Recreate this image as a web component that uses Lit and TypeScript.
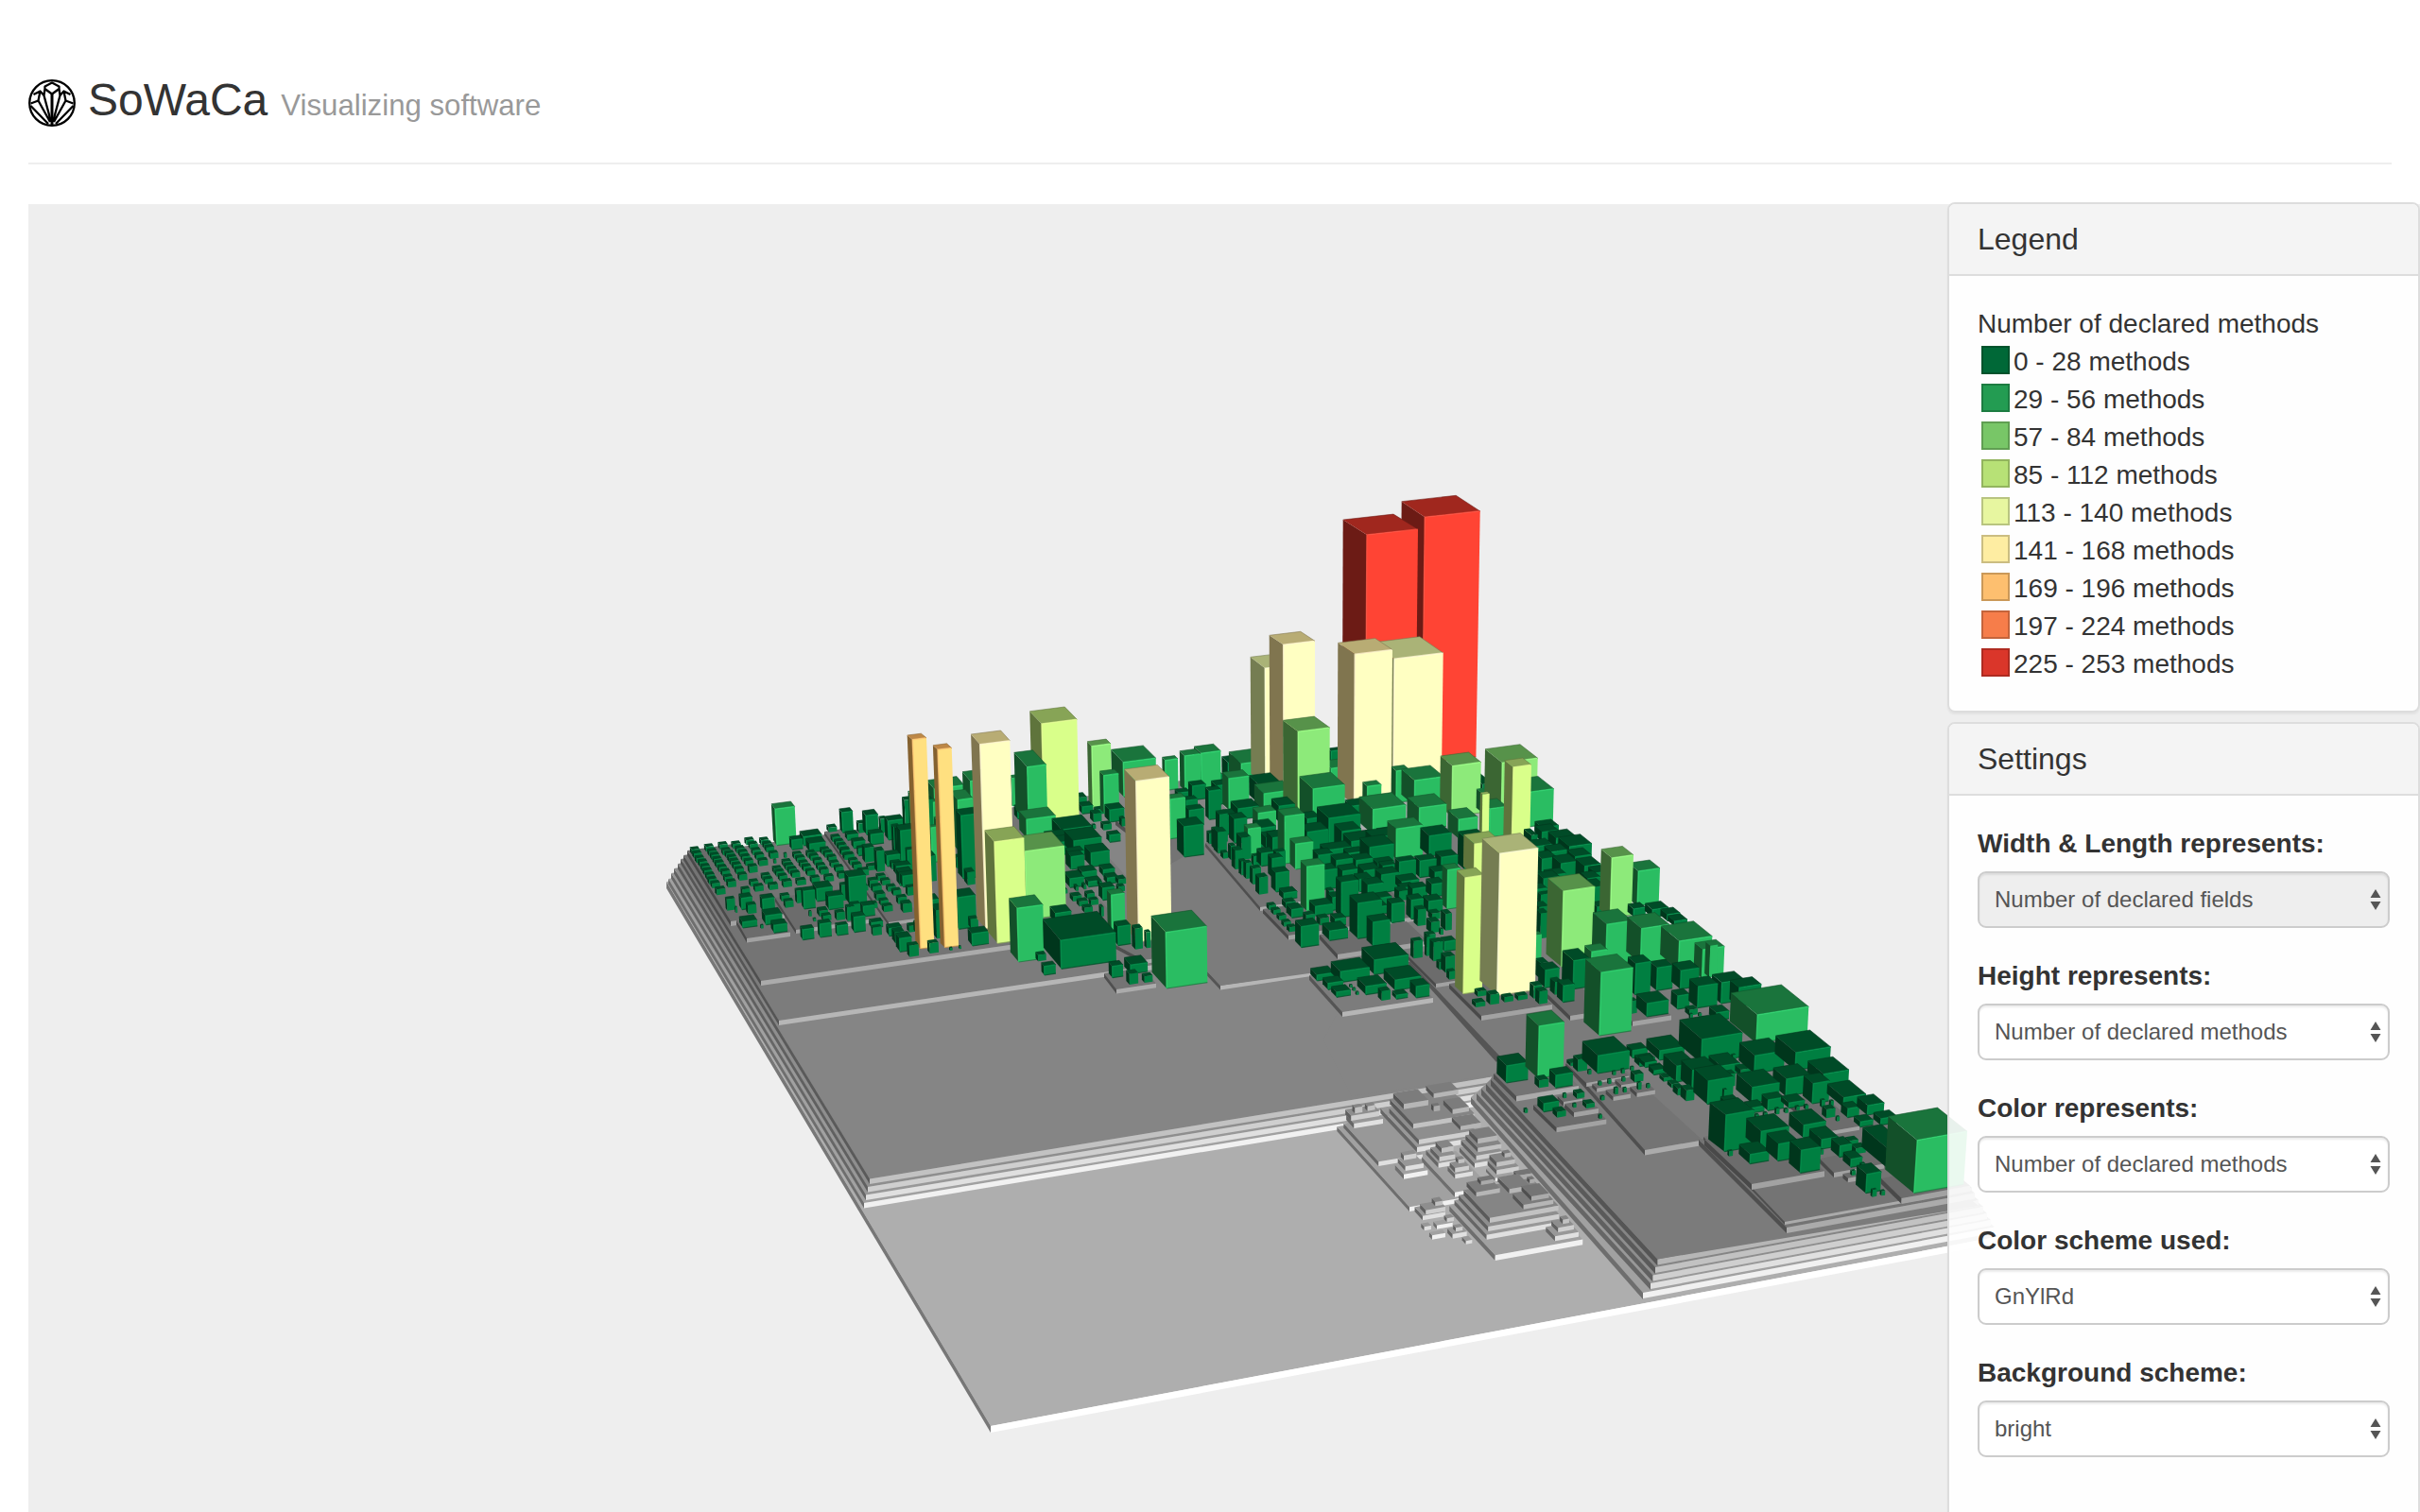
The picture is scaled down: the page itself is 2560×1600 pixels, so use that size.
import { LitElement, html, svg, css } from "lit";
import { customElement, property } from "lit/decorators.js";

type Pt = [number, number];
interface Tone { front: string; top: string; side: string; edge: string; }

/* Vanishing points of the two ground axes and of the vertical axis. */
const VD: Pt = [-300, -708];
const VW: Pt = [12800, -700];
const VV: Pt = [1385, 11500];

const TONES: Record<string, Tone> = {
  a: { front: "#007f41", top: "#004b27", side: "#00361c", edge: "#008f4b" },
  b: { front: "#2abd62", top: "#1a743c", side: "#135029", edge: "#2fd670" },
  c: { front: "#8dea7a", top: "#57924a", side: "#3b6633", edge: "#9bff85" },
  d: { front: "#d9ff8a", top: "#87a456", side: "#5f743c", edge: "#e6ff93" },
  e: { front: "#ffffc2", top: "#aab377", side: "#757d52", edge: "#ffffda" },
  f: { front: "#ffffc2", top: "#b8ac74", side: "#80754f", edge: "#fff5d0" },
  g: { front: "#ffe080", top: "#bd8746", side: "#84612f", edge: "#ffc672" },
  h: { front: "#ff4434", top: "#a0271e", side: "#6c1b15", edge: "#ff5140" },
  "0": { front: "#ffffff", top: "#aeaeae", side: "#777777", edge: "" },
  "1": { front: "#f1f1f1", top: "#a1a1a1", side: "#6e6e6e", edge: "" },
  "2": { front: "#e0e0e0", top: "#989898", side: "#666666", edge: "" },
  "3": { front: "#cfcfcf", top: "#8e8e8e", side: "#606060", edge: "" },
  "4": { front: "#c2c2c2", top: "#858585", side: "#5a5a5a", edge: "" },
  "5": { front: "#b6b6b6", top: "#7c7c7c", side: "#555555", edge: "" },
  "6": { front: "#ababab", top: "#747474", side: "#4f4f4f", edge: "" },
  "7": { front: "#a2a2a2", top: "#6c6c6c", side: "#494949", edge: "" },
};

const toward = (p: Pt, v: Pt, t: number): Pt => [p[0] + (v[0] - p[0]) * t, p[1] + (v[1] - p[1]) * t];
const pts = (...p: Pt[]) => p.map((q) => q[0].toFixed(1) + "," + q[1].toFixed(1)).join(" ");

interface Box { k: string; x: number; y: number; w: number; h: number; d: number; r: number; }

/* A block is "tone x y w h d r": upper left corner of the front face, its size,
   how far the roof recedes, and optionally the run of the receding edge per
   unit of rise. Lengths are in thirds of a pixel from the tile's origin. */
function tile(ox: number, oy: number, text: string): Box[] {
  return text.trim().split(/[;\n]+/).map((s) => s.trim()).filter(Boolean).map((s) => {
    const [k, ...n] = s.split(/\s+/);
    const [x, y, w = 25, h = 15, d = 9, r = 0] = n.map(Number);
    return { k, x: ox + x / 3, y: oy + y / 3, w: w / 3, h: h / 3, d: d / 3, r };
  });
}

function drawBox(b: Box) {
  const t = TONES[b.k];
  const A: Pt = [b.x, b.y];
  const back: Pt = b.r ? [b.x - b.r * (b.y - VD[1]), VD[1]] : VD;
  const B = toward(A, VW, b.w / (VW[0] - b.x));
  const td = b.d / (b.y - VD[1]);
  const D = toward(A, back, td);
  const C = toward(B, back, td);
  const tv = b.h / (VV[1] - b.y);
  const A2 = toward(A, VV, tv), B2 = toward(B, VV, tv), D2 = toward(D, VV, tv);
  const big = t.edge && b.w > 11;
  return svg`<polygon points=${pts(A, D, D2, A2)} fill=${t.side}/>
    <polygon points=${pts(A, B, C, D)} fill=${t.top}/>
    <polygon points=${pts(A, B, B2, A2)} fill=${t.front}/>
    ${big ? svg`<polyline points=${pts(A2, A, B)} fill="none" stroke=${t.edge} stroke-width="1.6" stroke-linejoin="round" opacity=".75"/>
      <polyline points=${pts(A2, B2)} fill="none" stroke=${t.top} stroke-width="1.2" opacity=".7"/>
      <polyline points=${pts(D, C, B)} fill="none" stroke=${t.side} stroke-width=".8" opacity=".7"/>` : ""}`;
}

/* A terrace: front left corner, x of the front right corner, back left corner. */
type Terrace = [string, number, number, number, number, number, number?];
function drawTerrace([k, fx, fy, rx, bx, by, th = 5.5]: Terrace) {
  const t = TONES[k];
  const F: Pt = [fx, fy], R = toward(F, VW, (rx - fx) / (VW[0] - fx));
  const B: Pt = [bx, by], BR = toward(R, VD, (fy - by) / (fy - VD[1]));
  const dn = (p: Pt): Pt => [p[0], p[1] + th];
  return svg`<polygon points=${pts(F, R, BR, B)} fill=${t.top}/>
    <polygon points=${pts(F, B, dn(B), dn(F))} fill=${t.side}/>
    <polygon points=${pts(F, R, dn(R), dn(F))} fill=${t.front}/>`;
}

const WEST: Terrace[] = [
  ["1", 914, 1273, 1570, 707, 930], ["2", 916, 1264.5, 1574, 710, 924], ["3", 918, 1256, 1579, 713, 919],
  ["4", 920, 1247.5, 1586, 717, 914], ["5", 824, 1080, 1270, 720, 909, 5], ["6", 805, 1038, 1190, 723, 905, 5],
  ["7", 773, 975, 830, 727, 900, 5], ["5", 1291, 1043, 1440, 1200, 945, 4.5],
  ["7", 790, 993, 836, 779, 974, 4.5], ["7", 842, 984, 930, 820, 950, 4], ["7", 940, 976, 974, 872, 880, 3.5],
  ["6", 1181, 1047, 1223, 1168, 1030, 4.5], ["6", 1239, 914, 1277, 1180, 868, 5], ["6", 1210, 1016, 1240, 1180, 1000, 4],
];
const EAST: Terrace[] = [
  ["6", 1333, 960, 1480, 1275, 892, 4], ["7", 1363, 990, 1500, 1336, 962, 4.5], ["7", 1415, 1010, 1510, 1396, 989, 5],
  ["7", 1519, 1041, 1570, 1488, 1010, 4], ["7", 1567, 1075, 1642, 1533, 1041, 5], ["7", 1661, 1075, 1700, 1633, 1048, 5],
  ["7", 1727, 1081, 1768, 1700, 1055, 5], ["6", 1604, 1160, 1670, 1580, 1136, 5.5],
  ["6", 1740, 1217, 1801, 1657, 1124, 5.5], ["6", 1890, 1299, 2089, 1797, 1206, 6], ["6", 1888, 1293, 2086, 1802, 1203, 3],
  ["7", 1853, 1253, 1930, 1803, 1206, 6], ["7", 1940, 1241, 1993, 1925, 1226, 5], ["7", 2011.5, 1268, 2084, 1990, 1247, 6],
  ["7", 1925, 1199, 1967, 1890, 1165, 4],
];

/* Side walls of the eastern plateau, lowest first: back corner, front corner, right end. */
const STAIRS: [string, Pt, Pt, number][] = [
  ["1", [1556, 1161], [1738, 1368], 2110], ["2", [1562, 1157], [1746, 1358], 2106], ["3", [1567, 1152], [1748.5, 1349.5], 2102],
  ["4", [1572, 1147], [1751, 1341], 2098], ["5", [1577, 1142], [1753.5, 1332.5], 2093],
];

const HILL = tile(1300, 1020, `
1 573 772 240 14 255;1 845 925 278 17 157;2 475 628 140 14 122;1 717 725 110 15 112
2 397 507 92 15 27;3 388 482 90 16 20;4 400 457 24 18 9;4 440 452 24 15 9
2 597 582 190 16 124;3 603 558 180 15 100;4 585 508 195 15 78;5 650 412 78 14 25;5 555 445 78 16 35;6 650 452 20 17 8;5 710 462 52 15 30;5 735 515 65 13 28
1 555 668 76 15 30;2 560 643 58 14 26;3 555 608 40 15 10
2 665 633 58 14 42;3 668 613 50 14 30;4 675 585 38 15 20
2 780 633 90 14 50;3 785 609 82 14 50;4 790 584 75 14 40;5 790 555 62 16 28
1 845 680 60 10 30;3 850 655 70 14 30;4 850 630 58 14 24;5 875 602 20 13 9
2 718 668 56 14 25;3 718 648 44 14 18;4 728 622 20 12 9
2 818 860 232 15 110;3 823 834 225 15 100;4 828 806 218 16 88;5 785 725 75 14 32;6 800 690 40 12 12;6 918 672 45 12 14;6 955 685 16 12 9;5 890 715 65 14 38;5 935 765 95 14 35;6 960 738 56 14 32
2 1035 865 75 15 30;3 1045 838 50 14 22;4 1060 812 20 14 10
2 615 800 72 14 28;3 625 782 62 14 20;4 655 756 24 13 12;1 660 830 50 12 12;3 692 808 22 12 10;2 710 858 45 14 18;3 720 838 22 12 9;2 620 835 22 12 11;1 645 862 42 13 10;2 752 880 20 10 13`);

const BLOCKS = [
  ...tile(690, 720, `
a 125 538;a 132 550;a 140 565;a 150 577;a 158 591;a 165 604;a 173 618;a 180 632;a 190 645;a 204 664 28 18
a 170 529;a 180 543;a 188 555;a 196 568;a 203 580;a 212 594;a 222 607;a 230 625;a 240 640 26 18
a 214 522;a 224 540;a 235 550;a 243 562;a 250 574;a 258 586;a 266 600;a 276 618 25 18
a 256 520;a 268 534;a 278 546;a 286 560;a 296 574;a 308 592 26 20
a 298 508;a 310 521;a 319 540;a 330 555;a 340 573 27 17
a 345 508;a 355 520;a 362 531;a 374 550 26 17;a 419 550 8 14 4;a 386 570 8 12 4
a 386 598;a 394 608;a 404 622;a 416 640 27 18;a 312 640;a 326 655 27 16;a 350 620;a 358 632;a 372 650 27 16;a 286 664 24 20
a 416 576;a 424 588;a 434 600;a 444 612;a 460 636 28 16
a 450 552;a 460 564;a 470 580;a 480 592;a 492 606;a 506 628 26 16
a 493 548;a 503 558;a 515 572;a 525 588;a 535 602;a 550 624 26 16
a 538 538;a 548 548;a 560 562;a 568 580;a 582 594;a 592 614 22 16
a 572 498;a 583 512;a 592 524;a 603 538;a 616 554;a 628 572;a 640 586;a 657 604 30 18;a 560 468 26 14 10
a 620 492 34 16 12;a 640 514 36 20 12;a 655 535 34 22;a 600 540;a 610 555
b 390 409 62 115 17;a 480 497 58 28 18;a 500 520 50 26 18;a 443 508 34 30 12;a 602 420 34 64 12;a 678 430 38 60 16;a 694 490 40 32 14;a 655 455 20 30 10
a 748 447 50 60 15;a 725 440 18 44;a 765 465 20 80;a 788 478 60 100 18;a 775 470 24 90;a 800 380 30 160 10;b 818 360 40 190 8;a 810 540 40 70
a 674 532 30 46 12;a 712 542 24 66 12;a 745 557 42 34 14;a 685 590 26 14;a 775 592 46 26 14;a 786 612 40 40 16;a 795 622 45 34 14;a 810 658 30 26;a 760 580 30 20
b 895 345 95 60 28;b 890 388 45 110 10;b 885 468 40 110 8;b 970 380 47 165 28;b 1010 320 60 170 30;b 900 440 20 130 8
b 1140 310 22 90;b 1190 275 60 180 46;a 1160 410 40 30 14;a 980 430 60 200 20
g 826 188 44 664 14 1.2;g 906 220 44 628 14 1.1;f 1040 203 95 585 32;d 1236 138 112 310 40;d 1086 513 94 322 37;c 1183 543 125 217 46;b 1158 724 82 170 32
b 1188 442 92 60 28;a 970 690 56 100 24;a 1010 758 24 28 10;a 1015 805 52 38 18;a 965 562 22 34 10;a 1000 610 24 40 14;a 1008 560 8 30;a 945 850 8 8 4;a 975 845 6 8 4;a 900 730 30 90 20;a 975 775 8 12
a 880 835 28 32 10;a 815 842 30 36 10;a 785 820 38 42 18;a 770 800 30 34 14;a 752 788 40 24 14;a 815 780 24 20 10;a 835 770 24 30;a 700 785 28 26 8;a 696 770 36 16 12
a 477 792 36 32 12;a 532 774 36 42 12;a 587 780 34 30 10;a 640 752 36 48 14;a 618 720 24 44;a 585 738 26 24 10;a 670 718 36 32 14;a 630 712 30 30
a 624 626 54 86 20;a 600 650 20 50;a 522 662 50 40 20;a 560 688 46 40 16;a 480 670 36 56 12;a 458 668 20 40;a 530 732 28 18 12;a 542 748 26 16;a 498 734 8 16 4;a 512 757 8 9 4
a 350 695 38 38 14;a 283 692 34 36 14;a 236 695 26 36 8;a 303 714 27 28 10;a 410 685 26 16;a 422 702 26 20;a 264 720 6 18 4;a 287 768 46 18 18;a 360 748 52 28 20;a 386 778 42 24 16;a 345 778 8 10 4
a 690 636 26 24 10;a 700 655 28 18;a 712 680 28 20 12;a 735 718 28 18 10;a 716 622;a 730 636;a 748 656;a 765 668;a 780 690 28 20;a 796 710 28 28 12;a 660 655;a 690 710;a 725 700;a 870 700 40 60 18;a 880 760 40 40
a 860 380 30 150 10;a 870 560 30 80 16;a 1290 515 60 40 20;a 1330 560 40 40 16`),
  ...tile(1100, 720, `
c 165 209 60 195 15;b 203 302 47 122 14;b 265 260 103 110 40;f 305 320 106 510 38;b 398 254 40 95 10;b 460 240 50 110 16;b 512 232 62 110 22;a 598 262 40 60 20;b 640 265 88 60 38
b 600 312 64 100 20;a 530 305 50 34 12;a 560 335 40 60 16;a 485 336 42 44 14;a 537 352 38 90 12;a 475 413 46 50 14;a 440 358 36 28 12;a 465 382 36 28 12;b 414 378 48 125 14;a 458 465 62 96 24
a 695 332 68 60 30;b 712 360 90 60 30;a 630 408 66 34 24;b 694 422 56 72 18;b 778 432 62 150 22;c 820 163 100 257 36 1.35;b 868 345 100 110 40;b 925 280 50 60 24;a 925 225 40 50
a 918 438 100 90 36;a 850 482 66 70 24;a 850 440 40 60 20;b 1058 410 104 80 40;b 1040 337 44 60 14;b 1132 288 40 100 14;b 1190 318 92 80 36;b 1205 405 86 70 34;b 1132 472 84 95 26
a 990 512 80 30 26;a 1048 530 76 60 30;a 1090 490 60 26 20;a 1237 494 70 64 26;c 1310 272 90 160 32;a 990 400 60 30 20;a 750 545 30 60
a 885 556 46 60 18;a 942 572 52 70 18;a 1005 572 52 60 18;a 1075 582 50 44 16;a 1142 577 52 60 14;a 1207 574 52 52 16;a 1275 562 52 50 18;b 812 520 56 80 18;b 848 592 56 140 20;b 662 472 40 90 14;a 910 540 80 40 20;a 980 550 50 30 16
a 900 604 44 60 18;a 962 606 50 40 18;a 930 690 36 40 16;a 1150 640 54 26 20;a 1030 605 50 34 20;a 870 650 30 60 14;a 1090 590 40 40 14;a 1255 610 40 30 18;a 700 470 50 60 24;a 740 500 50 50 20;a 640 500 30 70 16;a 1060 500 70 40 24;a 960 480 60 60 24;a 760 400 50 50 24;a 1150 660 40 30 14;a 1070 720 34 24 16
a 565 482 28 68 14;a 590 430 36 60 18;a 618 442 40 75 18;a 570 425 26 90 12;a 538 486 18 34;a 553 474 18 60;a 606 526 16 44;a 620 540 24 60 12;a 640 575 16 44;a 655 580 18 50;a 676 598 26 50 10;a 696 626 28 54 12;a 582 548 16 18
a 720 500 44 36 18;a 704 550 40 40 16;a 738 566 34 60 14;a 750 612 42 60 16;a 775 676 42 20 16;a 680 560 40 30
a 728 715 22 14;a 742 730 22 14;a 760 748 22 14;a 775 768 22 14;a 792 784 22 15;a 780 705 32 18 12;a 800 728 36 26 18;a 845 745 28 26 10;a 875 718 56 30 20;a 890 756 28 22 12;a 938 758 34 22 16
a 830 782 56 66 20;a 920 796 58 30 24;a 1010 708 76 112 26;a 1058 768 54 76 20;a 958 642 54 110 18;a 1042 650 50 50 20;a 1085 618 56 56 20;a 1015 632 40 40 18;a 1075 692 42 30 16;a 1118 710 40 60 16;a 1180 698 38 60 16;a 1185 662 46 34 16;a 1245 648 40 40 18;a 1235 702 44 36 18;a 1200 728 26 52 12;a 1245 740 26 20 12;a 1242 768 28 34 14;a 1288 742 20 52 14;a 1272 790 9 18 5;a 918 668 16 60 10;a 1140 670 30 30 14
b 1295 602 40 124 16;a 1187 828 28 55 10;a 1230 808 26 40 10;a 1228 815 12 60 6;a 1250 832 30 60 12;a 1285 830 36 30 14;a 1288 878 30 50 14;a 1268 895 16 24;a 1300 925 20 25
a 880 936 55 18 22;a 955 925 92 34 32;a 1062 888 108 46 40;a 915 962 48 20 18;a 942 990 45 16 18;a 1035 972 65 26 28;a 1128 952 82 32 36;a 1195 972 42 36 20;a 1085 987 28 30 12;a 1132 1000 36 12 14;a 985 968 8 8 4;a 995 978 8 8 4;a 1005 990 8 9 4
a 66 826 175 90 68;b 400 800 130 178 52;a 248 782 40 60 16;a 302 788 24 66 12;a 230 908 34 36 14;a 288 904 54 28 24;a 284 932 28 34 12;a 332 940 26 20 10;a 338 800 14 50 8;b 227 682 42 112 16;a 14 908 36 28 12;a -6 872 26 20 10
a 70 475 95 34 36;a 108 510 88 46 34;a 95 548 46 50 16;a 163 548 58 44 24;a 30 500 60 40 20;a 96 630 44 28 22;a 135 610 46 20 18;a 202 602 36 20 16;a 215 628 34 18 14;a 155 640 40 16 14;a 105 686 28 16 12;a 125 702 28 16 10;a 142 722 26 16 10;a 150 678 24 16 10;a 162 698 24 16;a 200 660 38 38 16;a 250 632 24 16 12;a 250 655 20 16;a 50 740 50 30 22;a 115 655 8 14;a 140 650 8 14;a 195 720 8 30
a 222 412 46 38 18;a 125 372 24 20 14;a 135 402 34 22 14;a 170 424 26 26 12;a 202 458 26 18 10;a 222 492 34 22 12;a 168 460 10 12 5;a 260 440 12 24;a 180 410 24 16;a 190 640 8 14;a 80 665 8 12`),
  ...tile(1300, 500, `
h 438 198 162 800 48 1.58;h 622 142 175 780 50 1.48;f 173 547 100 450 30 1.5;e 115 622 60 370 36 1.3;e 525 592 155 400 52 1.4;f 400 577 119 475 36 1.5`),
  ...tile(1500, 760, `
c 268 142 112 150 44;d 303 156 57 236 22;d 205 242 22 140 6;b 345 236 86 110 40;b 228 288 54 90 26;b 130 322 60 60 30;b 205 240 20 60 16;a 205 210 30 50 30;d 180 400 80 100 30;e 260 430 122 450 48;d 150 507 60 368 24;a 150 380 60 100 20
a 395 362 50 30 20;a 440 382 60 30 22;a 482 408 70 46 30;a 375 408 52 30 20;a 395 448 46 50 22;a 455 462 52 46 24;a 530 470 50 50 24;a 565 492 40 60 20;a 360 372 20 30 20;a 420 500 50 30 18;a 370 545 40 30 16;a 545 540 50 50 24;a 365 495 30 40;a 570 600 36 30 16;a 400 560 60 40
a 395 348 52 30 20;a 425 425 50 40 20;a 500 440 50 50 22;a 400 510 50 60 20;a 390 620 24 80 14;a 540 510 40 60 20
c 616 444 68 190 28;b 700 486 68 110 26;c 462 550 100 240 42;b 600 655 80 130 38;b 710 668 88 110 38;b 830 708 104 90 48;b 905 735 68 90 22;b 928 722 24 100 12
a 685 606 38 24 16;a 745 608 50 24 20;a 792 624 40 20 18;a 815 645 40 16 18;a 692 780 48 98 22;a 760 793 50 72 20;a 835 802 58 58 24;a 890 852 62 68 24;a 965 840 70 66 26;a 1020 856 70 60 24
b 1078 942 162 90 70;a 728 906 68 42 30;a 825 882 38 42 18;a 680 898 16 40 10;a 862 926 26 18 12;a 948 936 40 24 20;a 865 940 8 14 4;a 893 938 8 10 4;a 905 950 8 8 4
a 495 770 50 90 32;b 552 742 50 60 20;a 405 800 44 56 20;a 390 778 24 50 16;a 435 838 22 40 14;a 462 850 36 52 18;a 386 868 26 40 12;a 368 850 26 40 12
a 190 868 28 16 10;a 230 878 28 32 12;a 275 886 28 16 10;a 318 882 30 14 10;a 184 904 30 14 12;a 385 600 30 60 16;b 375 688 18 90;a 390 560 20 60;b 582 808 101 200 44`),
  ...tile(1300, 1020, `
a 882 324 68 54 30;b 985 198 80 165 38;a 985 370 30 24 14;a 1038 354 54 40 20;a 1172 292 100 56 46;a 1108 304 30 38 14;a 1085 315 20 10 12;a 1000 444 48 26 20;a 1042 470 28 18 14;a 1105 412 24 16 12;a 1135 445 26 14 12;a 1288 352 28 24 12;a 1282 275 46 24 18;a 1305 306 48 20 16;a 1348 334 34 18 14
a 1142 338 9 14 4;a 1220 342 9 12 4;a 1248 335 9 14 4;a 1277 328 9 12 4;a 1175 375 9 12 4;a 1205 368 9 14 4;a 1250 362 9 12 4;a 1300 378 10 22 5;a 1226 395 10 20 5;a 1254 395 9 14 4;a 1328 383 9 12 4;a 1183 422 10 12 5;a 940 462 9 12 5;a 1063 413 9 14 4;a 1094 445 9 12 4;a 1176 480 9 12 4`),
  ...tile(1700, 980, `
a 302 360 128 76 62;a 470 412 94 56 42;a 600 402 110 56 54;a 688 470 80 40 42;a 462 512 86 50 44;a 570 486 78 54 36;a 655 500 52 64 26;a 752 545 70 30 44;a 828 570 52 30 28;a 765 580 36 28 18;a 697 582 28 28 12;a 805 622 40 16 18;a 870 612 50 20 20;a 730 606 9 14 4
a 168 396 78 30 38;a 222 445 60 50 38;a 272 458 75 60 32;a 322 492 80 74 40;a 362 445 60 30 34;a 425 456 32 18 16;a 378 600 90 116 40 1.3;a 388 470 20 40 12;a 372 520 10 40 5;a 400 410 10 20 5
a 490 652 88 60 42;a 545 692 62 54 34;a 617 712 62 72 32;a 455 725 60 30 32;a 625 632 70 40 40;a 682 678 52 30 34;a 740 698 38 36 24;a 775 740 36 26 22;a 790 706 32 18 14;a 770 682 28 20 12;a 825 788 46 60 28;a 843 838 14 22 5;a 872 842 11 14 5;a 778 778 12 14 5;a 808 755 12 16 5;a 680 710 8 16 4
a 890 706 60 60 66;b 985 680 158 168 76;a 90 398 38 18 20;a 122 435 36 14 22;a 150 460 36 12 16;a 180 482 28 12 12;a 205 502 24 12 12;a 225 516 20 22 14;a 252 522 26 34 16
a 512 552 50 34 18;a 578 562 50 16 22;a 458 578 42 16 20;a 378 558 40 14 16;a 538 580 10 18 5;a 566 582 10 12 5;a 602 574 10 12 5;a 630 570 10 12 5;a 682 553 11 22 5;a 711 556 9 16 5;a 473 600 10 12 5;a 500 594 10 14 5;a 388 715 12 16 5;a 440 520 20 20`),
].sort((p, q) => p.y + p.h + 0.15 * p.x - (q.y + q.h + 0.15 * q.x));

const LOTS = tile(1300, 1020, `
7 1135 378 135 12 62;7 1040 520 158 15 72;7 1062 438 60 14 18;7 1095 472 78 15 28;7 1168 395 60 12 14;7 1245 385 62 12 18;7 1220 422 55 13 22;7 1295 410 58 13 20`)
  .concat(tile(1700, 980, `7 765 800 28 14 14`));

const CLASSES: [string, string][] = [
  ["#006837", "0 - 28 methods"], ["#239c52", "29 - 56 methods"], ["#78c667", "57 - 84 methods"],
  ["#b7e176", "85 - 112 methods"], ["#e7f6a0", "113 - 140 methods"], ["#feeda2", "141 - 168 methods"],
  ["#fdbf6f", "169 - 196 methods"], ["#f67d4a", "197 - 224 methods"], ["#da362a", "225 - 253 methods"],
];

@customElement("city-view")
class CityView extends LitElement {
  static styles = css`:host { display: block; } .scene { display: block; width: 2530px; height: 1384px; }`;
  render() {
    return html`<svg class="scene" viewBox="30 216 2530 1384">
      ${drawTerrace(["0", 1048, 1509, 2114, 705, 933, 7])}
      ${WEST.map(drawTerrace)}
      ${HILL.map(drawBox)}
      ${STAIRS.map(([k, b, f, rx]) => {
        const t = TONES[k];
        const r = toward(f, VW, (rx - f[0]) / (VW[0] - f[0]));
        const dn = (p: Pt, n = 7): Pt => [p[0], p[1] + n];
        return svg`<polygon points=${pts(f, r, toward(r, VD, 0.15), b)} fill=${t.top}/>
          <polygon points=${pts(f, b, dn(b), dn(f))} fill=${t.side}/>
          <polygon points=${pts(f, r, dn(r, 6), dn(f, 6))} fill=${t.front}/>`;
      })}
      <polygon fill="#7b7b7b" points="1753.5,1332.5 2093,1276 1610,878 1276,878 1276,893 1492,1020 1587,1120 1577,1142"/>
      <polygon fill="#858585" points="1440,1024 1492,1020 1587,1120 1582,1137 1430,1160 1400,1100"/>
      <polygon fill="#7c7c7c" points="1276,893 1333,960 1400,940 1488,1010 1492,1018 1440,1023 1385,1030 1291,1043 1200,945 1239,914"/>
      <polygon fill="#555" points="1492,1018 1587,1118 1583,1124 1488,1018"/>
      ${EAST.map(drawTerrace)}
      ${drawTerrace(["5", 1420, 1071, 1516, 1385, 1032, 5])}
      ${LOTS.map(drawBox)}
      ${BLOCKS.map(drawBox)}
    </svg>`;
  }
}

@customElement("side-panel")
class SidePanel extends LitElement {
  @property() heading = "";
  static styles = css`
    :host { display: block; box-sizing: border-box; border: 2px solid #ddd; border-radius: 8px; overflow: hidden;
      background: rgba(255,255,255,.9); box-shadow: 0 2px 2px rgba(0,0,0,.05); }
    .head { padding: 20px 30px; line-height: 34px; font-size: 32px; border-bottom: 2px solid #ddd; background: #f4f4f4; }
    .body { padding: 31px 30px 29px 30px; }`;
  render() {
    return html`<div class="head">${this.heading}</div><div class="body"><slot></slot></div>`;
  }
}

@customElement("app-root")
class AppRoot extends LitElement {
  static styles = css`
    :host { display: block; width: 2560px; height: 1600px; overflow: hidden; background: #fff; color: #333;
      font: 28px/40px "Liberation Sans", Arial, sans-serif; }
    .header { box-sizing: border-box; margin: 0 30px 42px; height: 174px; padding-top: 76px; border-bottom: 2px solid #eee;
      display: flex; align-items: flex-start; }
    .logo { width: 50px; height: 50px; margin: 8px 13px 0 0; }
    .name { font-size: 48px; line-height: 60px; }
    .tag { font-size: 31.2px; color: #999; margin-left: 14px; }
    .stage { margin-left: 30px; height: 1384px; background: #eee; display: grid; }
    .city, .side { grid-area: 1 / 1; }
    .side { justify-self: end; width: 500px; margin-top: -2px; display: flex; flex-direction: column; gap: 10px; z-index: 1; }
    .set { height: 900px; flex: none; }
    .row { display: flex; height: 40px; }
    .swatch { box-sizing: border-box; width: 30px; height: 30px; margin: 3px 4px 0 4px; border: 2px solid rgba(0,0,0,.2); }
    .label { font-weight: bold; margin-bottom: 9px; }
    .select { box-sizing: border-box; height: 60px; border: 2px solid #ccc; border-radius: 9px; background: #fff; color: #555;
      padding: 0 7px 0 16px; margin-bottom: 31px; display: flex; align-items: center; justify-content: space-between;
      font-size: 24px; box-shadow: inset 0 2px 2px rgba(0,0,0,.075); }
    .off { background: #eee; }
    .arrows { width: 12px; height: 24px; }`;
  render() {
    const fields: [string, string, boolean?][] = [
      ["Width & Length represents:", "Number of declared fields", true],
      ["Height represents:", "Number of declared methods"],
      ["Color represents:", "Number of declared methods"],
      ["Color scheme used:", "GnYlRd"],
      ["Background scheme:", "bright"],
    ];
    return html`
      <div class="header">
        <svg class="logo" viewBox="0 0 50 50" fill="none" stroke="#000" stroke-width="2.3" stroke-linejoin="round">
          <circle cx="25" cy="25" r="23.8"/>
          <path d="M25 3.500 32.500 7.500V10L25 15.500 17.500 10V7.500ZM17.500 10 16.500 17 24 45M32.500 10 33.500 17 26 45M16.500 17 12.500 12.500 5.500 16M12.500 12.500 10.500 22.500 2.500 25.500M10.500 22.500 23 45M2.500 28 21 47M33.500 17 37.500 12.500 44.500 16M37.500 12.500 39.500 22.500 47.500 25.500M39.500 22.500 27 45M47.500 28 29 47"/>
          <path stroke-width="3" d="M25 15.500V48"/>
        </svg>
        <div class="name">SoWaCa<span class="tag">Visualizing software</span></div>
      </div>
      <div class="stage">
        <city-view class="city"></city-view>
        <div class="side">
          <side-panel heading="Legend">
            <div>Number of declared methods</div>
            ${CLASSES.map(([c, t]) => html`<div class="row"><span class="swatch" style="background-color:${c}"></span>${t}</div>`)}
          </side-panel>
          <side-panel class="set" heading="Settings">
            ${fields.map(([l, v, off]) => html`<div class="label">${l}</div>
              <div class="select ${off ? "off" : ""}">${v}<svg class="arrows" viewBox="0 0 12 24" fill="#555"><path d="M0.500 10 6 1 11.500 10ZM0.500 14 6 23 11.500 14Z"/></svg></div>`)}
          </side-panel>
        </div>
      </div>`;
  }
}
